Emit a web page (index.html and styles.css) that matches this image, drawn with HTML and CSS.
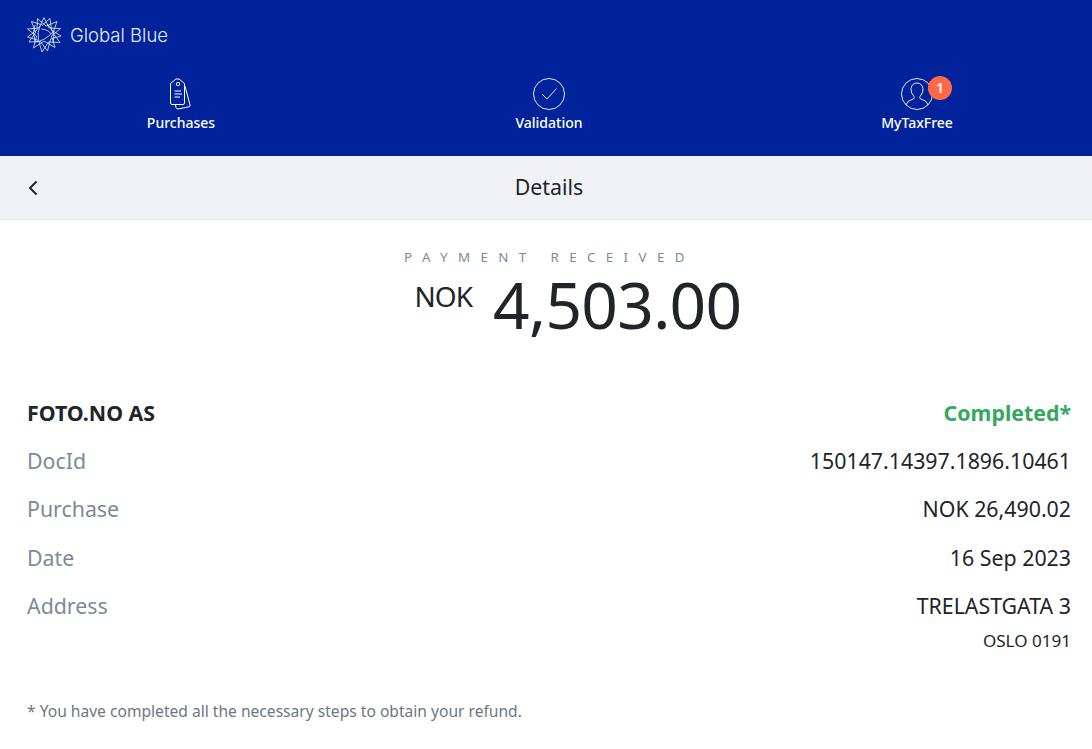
FILE: index.html
```html
<!DOCTYPE html>
<html lang="en">
<head>
    <meta charset="UTF-8">
    <meta name="viewport" content="width=device-width, initial-scale=1.0">
    <title>Details</title>
    <link rel="stylesheet" href="styles.css">
</head>
<body>

<header class="top">
    <div class="brand">
        <svg class="brand-logo" viewBox="0 0 36 36" fill="none" stroke="#e6ebf8" stroke-width="0.8">
            <polygon points="18,0.5 23,11 34.5,11.5 25.5,19 29,30.5 18,24 7.5,31 10.5,19 1.5,12 13,11"/>
            <polygon points="24,1.5 25.5,13 35,19 24.5,22 21.5,34 14.5,24.5 3,25 9.5,15.5 5.5,4.5 16.5,8"/>
            <polygon points="11.5,1.5 20,9 31,4.5 27,16 34,25.5 22.5,25 16,35 12.5,23.5 1.5,20 11,13"/>
            <path d="M14 9 Q11 15 12.5 23 M15.5 12 Q23 13 25 17 M8 25 Q18 25 28 14 M9 8 Q6 15 9 24 M21 7 Q30 14 27 26"/>
        </svg>
        <span class="brand-name">Global Blue</span>
    </div>
    <nav class="tabs">
        <a class="tab">
            <svg class="tab-icon" viewBox="0 0 32 32" fill="none" stroke="#fff" stroke-width="1">
                <path d="M13 1 L16 1 L21.5 5.5 L21.5 25 Q21.5 26.5 20 26.5 L9 26.5 Q7.5 26.5 7.5 25 L7.5 5.5 Z" transform="translate(-2 0)"/>
                <circle cx="13" cy="6" r="1.7"/>
                <path d="M9.5 13 H16 M9.5 16 H17 M9.5 19 H15"/>
                <path d="M20 8 L25 27 Q25.3 28.5 24 28.8 L13 31 Q11.5 31 11 29.5 L10.5 27"/>
            </svg>
            <span>Purchases</span>
        </a>
        <a class="tab">
            <svg class="tab-icon" viewBox="0 0 32 32" fill="none" stroke="#dfe6f7" stroke-width="1">
                <circle cx="16" cy="16" r="15.5"/>
                <path d="M9 16 L14 21 L23.5 10.5"/>
            </svg>
            <span>Validation</span>
        </a>
        <a class="tab">
            <span class="tab-icon-wrap">
                <svg class="tab-icon" viewBox="0 0 32 32" fill="none" stroke="#dfe6f7" stroke-width="1">
                    <circle cx="16" cy="16" r="15.5"/>
                    <path d="M5 27 Q6 22.5 11 21.5 L13 20.5 Q13.5 19.5 13 18.5 Q9.5 15 10 10.5 Q11 5 16 5 Q21 5 22 10.5 Q22.5 15 19 18.5 Q18.5 19.5 19 20.5 L21 21.5 Q26 22.5 27 27"/>
                </svg>
                <span class="badge">1</span>
            </span>
            <span>MyTaxFree</span>
        </a>
    </nav>
</header>

<div class="subbar">
    <svg class="back" viewBox="0 0 10 16" fill="none" stroke="#212529" stroke-width="2">
        <path d="M8.5 1.5 L2 8 L8.5 14.5"/>
    </svg>
    <span class="subbar-title">Details</span>
</div>

<section class="summary">
    <div class="summary-label">PAYMENT RECEIVED</div>
    <div class="summary-amount">
        <span class="currency">NOK</span>
        <span class="value">4,503.00</span>
    </div>
</section>

<section class="info">
    <div class="row">
        <span class="merchant">FOTO.NO AS</span>
        <span class="status">Completed*</span>
    </div>
    <div class="row">
        <span class="key">DocId</span>
        <span>150147.14397.1896.10461</span>
    </div>
    <div class="row">
        <span class="key">Purchase</span>
        <span>NOK 26,490.02</span>
    </div>
    <div class="row">
        <span class="key">Date</span>
        <span>16 Sep 2023</span>
    </div>
    <div class="row">
        <span class="key">Address</span>
        <span>TRELASTGATA 3</span>
    </div>
    <div class="address-line">OSLO 0191</div>
</section>

<p class="note">* You have completed all the necessary steps to obtain your refund.</p>

</body>
</html>
```

FILE: styles.css
```css
body {
    margin: 0;
    font-family: "Noto Sans", "Open Sans", sans-serif;
    color: #212529;
    background-color: white;
    overflow: hidden;
}

.top {
    height: 156px;
    box-sizing: border-box;
    background-color: #00239c;
    color: white;
    overflow: hidden;
}

.brand {
    display: flex;
    align-items: center;
    gap: 8px;
    height: 70px;
    padding-left: 26px;
}

.brand-logo {
    width: 36px;
    height: 36px;
}

.brand-name {
    font-family: Inter, sans-serif;
    font-weight: 300;
    font-size: 18.5px;
    color: #e6ebf8;
}

.tabs {
    display: grid;
    grid-template-columns: repeat(3, 362px);
    gap: 6px;
}

.tab {
    display: flex;
    flex-direction: column;
    align-items: center;
    height: 86px;
    padding-top: 8px;
    box-sizing: border-box;
    font-size: 14px;
    font-weight: 500;
    line-height: 20px;
}

.tab-icon {
    display: block;
    width: 32px;
    height: 32px;
}

.tab-icon-wrap {
    position: relative;
    display: block;
}

.tab > span:last-child {
    margin-top: 3px;
}

.badge {
    position: absolute;
    top: -2px;
    left: 27px;
    width: 24px;
    height: 24px;
    border-radius: 50%;
    background-color: #ff6a45;
    color: white;
    font-size: 14px;
    font-weight: 600;
    line-height: 23px;
    text-align: center;
}

.subbar {
    position: relative;
    display: flex;
    align-items: center;
    justify-content: center;
    height: 63px;
    background-color: #f0f2f6;
    border-bottom: 1px solid #e4e6ea;
    padding-left: 6px;
}

.back {
    position: absolute;
    left: 28px;
    top: 24px;
    width: 10px;
    height: 16px;
}

.subbar-title {
    font-size: 21.33px;
    line-height: 26px;
    margin-bottom: 2px;
}

.summary {
    text-align: center;
    padding-left: 7px;
}

.summary-label {
    margin-top: 27px;
    font-size: 13.33px;
    line-height: 20px;
    letter-spacing: 10.4px;
    color: #7d8a96;
}

.summary-amount {
    display: flex;
    justify-content: center;
    align-items: flex-start;
    gap: 21px;
    height: 73px;
    padding-left: 57px;
}

.currency {
    font-size: 28px;
    line-height: 40px;
    letter-spacing: -1px;
    margin-top: 9px;
}

.value {
    font-size: 64px;
    line-height: 72px;
    letter-spacing: -0.7px;
    margin-top: 2px;
}

.info {
    margin-top: 48px;
    padding: 0 21px 0 27px;
}

.row {
    display: flex;
    justify-content: space-between;
    height: 48.3px;
    align-items: center;
    font-size: 21.33px;
}

.merchant {
    font-weight: 700;
}

.status {
    font-weight: 700;
    color: #35a85f;
}

.key {
    color: #7d8a96;
}

.address-line {
    text-align: right;
    font-size: 17.07px;
    line-height: 24px;
}

.note {
    margin: 48px 0 0;
    padding-left: 27px;
    font-size: 15.6px;
    line-height: 20px;
    color: #6c7883;
}
```
